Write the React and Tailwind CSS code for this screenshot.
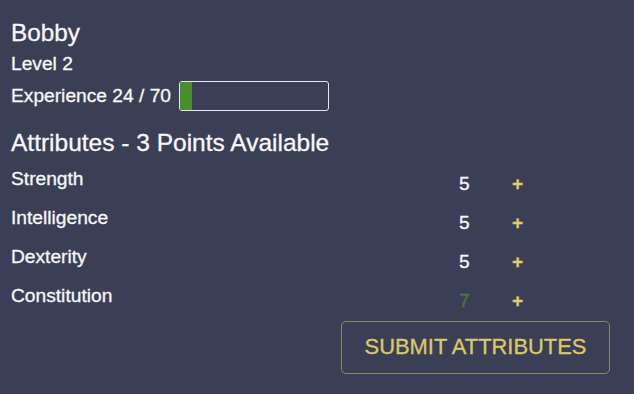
import React from "react";

const attrs = [
  { name: "Strength", value: 5, changed: false },
  { name: "Intelligence", value: 5, changed: false },
  { name: "Dexterity", value: 5, changed: false },
  { name: "Constitution", value: 7, changed: true },
];

export default function App() {
  return (
    <div className="min-h-screen w-full bg-[#3b3f56] text-[#f7f7f9] font-['Liberation_Sans',Arial,sans-serif] [-webkit-text-stroke:0.3px] pl-[11px] pr-[24px] pt-[19px]">
      <div className="text-[24.3px] leading-[27px]">Bobby</div>
      <div className="mt-[7px] text-[19.2px] leading-[22px]">Level 2</div>
      <div className="mt-[6px] flex items-center gap-[8px]">
        <span className="text-[19.2px] leading-[22px]">Experience 24 / 70</span>
        <div className="h-[30px] w-[150px] rounded-[3px] border border-[#e8e8ec] overflow-hidden">
          <div className="h-full w-[12px] bg-[#4b8c2c]" />
        </div>
      </div>
      <div className="mt-[18px] text-[24.5px] leading-[27px]">Attributes - 3 Points Available</div>
      <div className="mt-[12px] flex flex-col">
        {attrs.map((a) => (
          <div key={a.name} className="flex h-[39px] items-start text-[19.2px] leading-[22px]">
            <div className="w-[448px]">{a.name}</div>
            <div className={"w-[53px] pt-[5px] " + (a.changed ? "text-[#4c7a34]" : "text-[#f7f7f9]")}>{a.value}</div>
            <div className="pt-[5px] text-[#dfcc6a] font-bold">+</div>
          </div>
        ))}
      </div>
      <div className="mt-[-3px] flex justify-end">
        <button className="h-[53px] w-[269px] rounded-[5px] border border-[#8d8664] text-[21.9px] text-[#dcc86a] bg-transparent">
          SUBMIT ATTRIBUTES
        </button>
      </div>
    </div>
  );
}
